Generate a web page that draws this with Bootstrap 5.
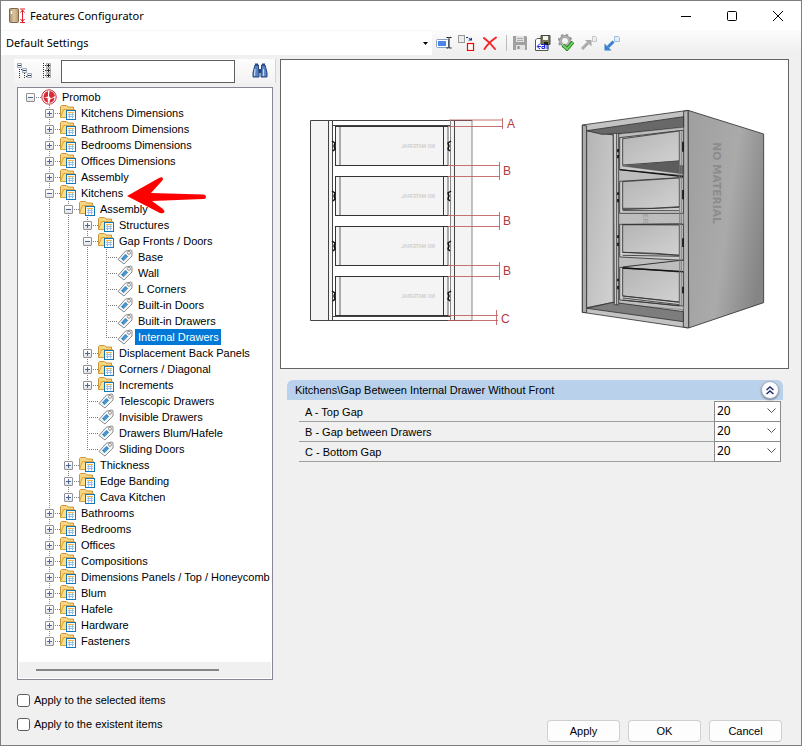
<!DOCTYPE html>
<html lang="en">
<head>
<meta charset="utf-8">
<meta name="viewport" content="width=device-width, initial-scale=1">
<title>Features Configurator</title>
<link href="https://cdn.jsdelivr.net/npm/bootstrap@5.3.0/dist/css/bootstrap.min.css" rel="stylesheet">
<style>
body{background:#fff;color:#000;font:11px/16px "Liberation Sans",Arial,sans-serif}
.win{min-height:calc(100vh - 3px);margin-right:4px;border:1px solid #7f7f7f;background:#f0f0f0}
.ui-font{font-family:"Noto Sans","Open Sans",sans-serif;font-size:11px}
.titlebar{height:29px;background:#fff;padding-left:7px}
.titlebar h1{font-size:11px;line-height:16px}
.caption-btn{width:46px;height:29px}
.plain{border:0;background:none;padding:0;color:inherit;display:flex;align-items:center;justify-content:center}
.settings{width:431px;background:#fff;border-top:1px solid #f7f7f7}
.preset{appearance:none;border:0;width:100%;height:24px;padding:0 16px 0 5px;color:#000;background:#fff url("data:image/svg+xml,%3Csvg xmlns='http://www.w3.org/2000/svg' width='5' height='3'%3E%3Cpath d='M0 0h5L2.500 3z'/%3E%3C/svg%3E") no-repeat right 4px center}
.tools{background:linear-gradient(#fcfcfc,#eee)}
.tools .plain{width:23px;height:24px}
.tool-sep{width:1px;height:16px;margin:0 1px 0 5px;background:#bdbdbd}
.side{width:279px}
.search-bar{height:24px;margin:0 4px 4px 13px;padding-right:4px;background:linear-gradient(#fdfdfd,#f3f3f3);border-right:1px solid #d4d4d4}
.search-bar .plain{width:22px;height:24px}
.search-bar input{width:174px;height:23px;border:1px solid #5f5f5f;background:#fff;padding:0 4px;margin:1px 0 0 3px}
.tree-box{margin:0 7px 0 16px;border:1px solid #828790;background:#fff;padding:1px 1px 0}
.tree,.tree ul{list-style:none;margin:0;padding:0}
.tree{padding-left:7px}
.tree ul{padding-left:19px}
.tree ul>li{background:repeating-linear-gradient(#808080 0 1px,transparent 1px 2px) 4px 0/1px 100% no-repeat}
.tree ul>li:last-child{background-size:1px 8px}
.node{height:16px;display:flex;align-items:center;white-space:nowrap;position:relative;background:repeating-linear-gradient(90deg,#808080 0 1px,transparent 1px 2px) 4px 8px/11px 1px no-repeat}
.node>svg{width:17px;height:16px;flex:none}
.node>span{padding:0 2px 0 3px;margin-left:1px}
.node.chosen>span{background:#0078d7;color:#fff}
.tog{width:9px;height:9px;margin:1px 6px 0 0;padding:0;border:1px solid #919191;border-radius:1px;background:linear-gradient(#4b63a7,#4b63a7) center/5px 1px no-repeat,linear-gradient(#fff,#e4e4e4);flex:none}
.tog.shut{background:linear-gradient(#4b63a7,#4b63a7) center/5px 1px no-repeat,linear-gradient(#4b63a7,#4b63a7) center/1px 5px no-repeat,linear-gradient(#fff,#e4e4e4)}
.leaf{padding-left:15px}
.pointer{position:absolute;left:81px;top:-9px}
.node>svg.pointer{width:80px;height:38px;z-index:2}
.hbar{height:16px;background:#f0f0f0;padding:7px 52px 0 17px;margin-bottom:1px}
.hbar div{height:2px;background:#868686}
.view{margin-right:12px;border:1px solid #646464;background:#fff}
.props{margin:11px 18px 0 7px}
.props-head{height:20px;background:#b9d1ea;border-radius:6px 6px 0 0;padding:0 4px 0 8px}
.fold{width:18px;height:18px;border-radius:50%;background:#fdfdff;border:1px solid #aab0bd;box-shadow:0 1px 2px #6b7890}
.props-body{margin:2px 2px 0 12px}
.prop{height:20px;border-bottom:1px solid #a0a0a0;padding-left:6px}
.prop select{width:67px;height:21px;margin-top:-1px;border:1px solid #8a8a8a;border-radius:0;color:#000;padding:0 20px 0 2px;font-size:12px;line-height:18px;background:#fff url("data:image/svg+xml,%3Csvg xmlns='http://www.w3.org/2000/svg' width='9' height='6'%3E%3Cpath d='M.5.5l4 4 4-4' fill='none' stroke='%23555'/%3E%3C/svg%3E") no-repeat right 4px center}
.foot{padding:12px 19px 3px 16px}
.foot-checks{padding-bottom:10px}
.foot label{gap:4px}
.foot input{width:13px;height:13px;margin:0;border:1px solid #5c5c5c;border-radius:3px}
.dlg-btn{width:73px;height:22px;padding:0;font-size:11px;line-height:18px;background:#fdfdfd;border:1px solid #d0d0d0;border-bottom-color:#bcbcbc;border-radius:4px;color:#000}
</style>
<script src="https://cdn.jsdelivr.net/npm/bootstrap@5.3.0/dist/js/bootstrap.bundle.min.js"></script>
</head>
<body>
<svg class="d-none" aria-hidden="true">
  <symbol id="folder" viewBox="0 0 17 16">
    <path d="M.5 12.500V1.500l1-1h5L8 2h5.500v3" fill="#f6d583" stroke="#c9963a"/>
    <path d="M.5 12.500L3.500 4.500h11L13 9l-5 3.500z" fill="#fbdf8d" stroke="#d9a23c"/>
    <rect x="6.500" y="5.500" width="9" height="9" fill="#fff" stroke="#1577b3"/>
    <path d="M8 7.500h6" stroke="#f2b73c"/><path d="M8 9.500h6M8 11.500h6M9.500 8v5.500M12.500 8v5.500" stroke="#9dc0e4"/>
  </symbol>
  <symbol id="tag" viewBox="0 0 17 16">
    <path d="M1 10.500L8.500 2l5.500-1 1 .8V7l-8 8z" fill="#f6f6f6" stroke="#8d8d8d"/>
    <path d="M4 9.500L8.500 5l2.500 2.500L6.500 12z" fill="#2f86c4"/><path d="M5.500 8L8 10.500M7 6.500L9.500 9" stroke="#8fc5ea" stroke-width=".7"/>
    <circle cx="12" cy="3.800" r="1.500" fill="#fff" stroke="#888" stroke-width=".9"/>
  </symbol>
</svg>
<div class="win d-flex flex-column">
  <header class="titlebar d-flex align-items-center">
    <svg width="18" height="18" viewBox="0 0 18 18"><defs><linearGradient id="door"><stop stop-color="#a98e68"/><stop offset=".5" stop-color="#dcc5a0"/><stop offset="1" stop-color="#b3986e"/></linearGradient></defs><rect x="1.500" y="1.500" width="9" height="14" rx="1" fill="url(#door)" stroke="#7d684c"/><path d="M3.500 4v3" stroke="#fff" stroke-width="1.500"/><path d="M12 2h5M12 15.500h5M14.500 3v12M12.500 5.500l2-2.500 2 2.500M12.500 12l2 2.500 2-2.500" fill="none" stroke="#e11b2c"/></svg>
    <h1 class="ui-font m-0 ms-1 fw-normal flex-grow-1">Features Configurator</h1>
    <button class="plain caption-btn" aria-label="Minimize"><svg width="10" height="10"><path d="M0 5.500h10" stroke="#000"/></svg></button>
    <button class="plain caption-btn" aria-label="Maximize"><svg width="10" height="10"><rect x=".5" y=".5" width="9" height="9" rx="1" fill="none" stroke="#000"/></svg></button>
    <button class="plain caption-btn" aria-label="Close"><svg width="10" height="10"><path d="M0 0l10 10M10 0L0 10" stroke="#000"/></svg></button>
  </header>
  <div class="d-flex">
    <div class="settings"><select class="preset ui-font" aria-label="Settings"><option>Default Settings</option></select></div>
    <div class="tools d-flex align-items-center flex-grow-1">
      <button class="plain" aria-label="Rename"><svg width="16" height="16"><rect x=".5" y="4.500" width="12" height="8" rx="1" fill="#fff" stroke="#8aa0bd"/><rect x="2" y="6" width="8" height="5" fill="#4a86e8"/><path d="M10.500 2.500h2l.5.500.5-.500h2M13 3v9.500M10.500 13h2l.5-.500.5.500h2" fill="none" stroke="#111"/></svg></button>
      <button class="plain" aria-label="Replace"><svg width="17" height="16" viewBox="0 0 17 16"><rect x=".5" y=".5" width="6" height="7" fill="#ececec" stroke="#999999"/><rect x="9.500" y="8.500" width="6" height="7" fill="#ffffff" stroke="#ff0000" stroke-width="1.200"/><path d="M8 2.500h2.500l2 2.500" fill="none" stroke="#113a9c" stroke-dasharray="2 1"/><path d="M10 5.500h4v-3z" fill="#113a9c"/></svg></button>
      <button class="plain" aria-label="Delete"><svg width="16" height="16"><path d="M2 3c4 3 8 7 11 11M14 2.500C9 6 5 10 2.500 14" fill="none" stroke="#f2282c" stroke-width="2" stroke-linecap="round"/></svg></button>
      <span class="tool-sep"></span>
      <button class="plain" aria-label="Save"><svg width="16" height="16"><path d="M1 1h13l1 1v13H1z" fill="#a0a0a0"/><path d="M4 1h8v6H4zM4 10h9v5H4z" fill="#e2e2e2"/><path d="M5 3.500h6M5 5.500h6" stroke="#aaa"/><path d="M5.500 11h2v3h-2z" fill="#8b8b8b"/></svg></button>
      <button class="plain" aria-label="Save as"><svg width="17" height="16"><path d="M3 3.500h11v12H1.500V5z" fill="#fff" stroke="#555"/><path d="M7 .5h9v9H7z" fill="#77765a" stroke="#444"/><path d="M9 1h5v4H9z" fill="#f3f3ec"/><path d="M10 7h4v3h-4z" fill="#222"/><path d="M6 8.500L3 11.500l3 2.500M4 11.500h3M8 9.500h2.500v4H8v-2h2M11.500 11h3M11.500 13h3" fill="none" stroke="#1725e0"/></svg></button>
      <button class="plain" aria-label="Validate"><svg width="16" height="17"><circle cx="7" cy="7" r="4.500" fill="none" stroke="#999" stroke-width="3"/><circle cx="7" cy="7" r="6.200" fill="none" stroke="#999" stroke-width="2" stroke-dasharray="2.500 2.370"/><circle cx="7" cy="7" r="4.200" fill="none" stroke="#c6c6c6"/><path d="M5 11l4 4 6-7" fill="none" stroke="#22861f" stroke-width="3.600"/><path d="M5 11l4 4 6-7" fill="none" stroke="#75d468" stroke-width="1.800"/></svg></button>
      <button class="plain" aria-label="Export"><svg width="16" height="16"><path d="M1 14l6-6" stroke="#aaa" stroke-width="3"/><path d="M4 5h6.500v6.500z" fill="#aaa"/><path d="M11.500 1.500h3l1 1v4h-4z" fill="#eee" stroke="#c5c5c5"/></svg></button>
      <button class="plain" aria-label="Import"><svg width="16" height="16"><path d="M9.500 6.500L4 12" stroke="#3b7fd0" stroke-width="3"/><path d="M.5 8.500V15.500H7.500z" fill="#3b7fd0"/><path d="M10.500 1.500h4l1 1v4h-5z" fill="#e4eefa" stroke="#9dbde6"/></svg></button>
    </div>
  </div>
  <div class="d-flex flex-grow-1 pt-1">
    <aside class="side d-flex flex-column flex-shrink-0">
      <div class="search-bar d-flex align-items-center">
        <button class="plain" aria-label="Expand tree"><svg width="16" height="16"><path d="M2.500 4v11M7.500 8v7M4 6.500h3M9 13.500h2" fill="none" stroke="#333" stroke-dasharray="1 1"/><path d="M.5.5h4v4h-4zM5.500 5.500h4v4h-4zM10.500 10.500h4v4h-4z" fill="#f7f7f7" stroke="#9ba8b8"/><path d="M1 2.500h3M6 7.500h3M11 12.500h3" stroke="#27496d"/></svg></button>
        <button class="plain" aria-label="Collapse tree"><svg width="11" height="16"><path d="M1.500 0v16M3 2.500h3M3 7.500h3M3 12.500h3" stroke="#333" stroke-dasharray="1 1"/><path d="M4.500.5h4v4h-4zM4.500 5.500h4v4h-4zM4.500 10.500h4v4h-4z" fill="#eee" stroke="#aaa"/><path d="M5 2.500h3M6.500 1v3M5 7.500h3M6.500 6v3M5 12.500h3M6.500 11v3" stroke="#222"/></svg></button>
        <input type="text" aria-label="Search features">
        <button class="plain ms-auto" aria-label="Find"><svg width="16" height="16"><path d="M3 2h3.500v4L7 7v7H1V9.500zM13 2H9.500v4L9 7v7h6V9.500z" fill="#5a83bf" stroke="#24467e"/><path d="M6.500 6h3v4h-3z" fill="#24467e"/><path d="M3 6L2.500 13M11.500 6v7" stroke="#c3d8f2" stroke-width="1.200"/><path d="M3 1.500h3M10 1.500h3" stroke="#24467e" stroke-width="2"/></svg></button>
      </div>
      <nav class="tree-box d-flex flex-column flex-grow-1" aria-label="Features">
        <ul class="tree flex-grow-1">
          <li>
            <div class="node"><button class="tog" aria-label="Toggle"></button><svg viewBox="0 0 17 16"><circle cx="8" cy="8" r="7.200" fill="#fff" stroke="#cf2c38"/><path d="M7 2.200A6 6 0 0 0 7 13.800L6.500 9 3 8.500 7 7.500zM8.500 2a6 6 0 0 1 5.500 5L10 9.500 8 7zM9 10.500l4.500-2A6 6 0 0 1 8.500 14z" fill="#d72a38"/></svg><span>Promob</span></div>
            <ul>
              <li><div class="node"><button class="tog shut" aria-label="Toggle"></button><svg><use href="#folder"/></svg><span>Kitchens Dimensions</span></div></li>
              <li><div class="node"><button class="tog shut" aria-label="Toggle"></button><svg><use href="#folder"/></svg><span>Bathroom Dimensions</span></div></li>
              <li><div class="node"><button class="tog shut" aria-label="Toggle"></button><svg><use href="#folder"/></svg><span>Bedrooms Dimensions</span></div></li>
              <li><div class="node"><button class="tog shut" aria-label="Toggle"></button><svg><use href="#folder"/></svg><span>Offices Dimensions</span></div></li>
              <li><div class="node"><button class="tog shut" aria-label="Toggle"></button><svg><use href="#folder"/></svg><span>Assembly</span></div></li>
              <li>
                <div class="node"><button class="tog" aria-label="Toggle"></button><svg><use href="#folder"/></svg><span>Kitchens</span>
                  <svg class="pointer" viewBox="0 0 80 38"><path d="M1 20L33 2q4-2 4 1 0 1-2 3L25 17l52 1.500q3 0 3 2.500t-3 2L26 25l11 8q3 3 0 4-2 1-5-1z" fill="#f00"/></svg></div>
                <ul>
                  <li>
                    <div class="node"><button class="tog" aria-label="Toggle"></button><svg><use href="#folder"/></svg><span>Assembly</span></div>
                    <ul>
                      <li><div class="node"><button class="tog shut" aria-label="Toggle"></button><svg><use href="#folder"/></svg><span>Structures</span></div></li>
                      <li>
                        <div class="node"><button class="tog" aria-label="Toggle"></button><svg><use href="#folder"/></svg><span>Gap Fronts / Doors</span></div>
                        <ul>
                          <li><div class="node leaf"><svg><use href="#tag"/></svg><span>Base</span></div></li>
                          <li><div class="node leaf"><svg><use href="#tag"/></svg><span>Wall</span></div></li>
                          <li><div class="node leaf"><svg><use href="#tag"/></svg><span>L Corners</span></div></li>
                          <li><div class="node leaf"><svg><use href="#tag"/></svg><span>Built-in Doors</span></div></li>
                          <li><div class="node leaf"><svg><use href="#tag"/></svg><span>Built-in Drawers</span></div></li>
                          <li><div class="node leaf chosen"><svg><use href="#tag"/></svg><span>Internal Drawers</span></div></li>
                        </ul>
                      </li>
                      <li><div class="node"><button class="tog shut" aria-label="Toggle"></button><svg><use href="#folder"/></svg><span>Displacement Back Panels</span></div></li>
                      <li><div class="node"><button class="tog shut" aria-label="Toggle"></button><svg><use href="#folder"/></svg><span>Corners / Diagonal</span></div></li>
                      <li><div class="node"><button class="tog shut" aria-label="Toggle"></button><svg><use href="#folder"/></svg><span>Increments</span></div></li>
                      <li><div class="node leaf"><svg><use href="#tag"/></svg><span>Telescopic Drawers</span></div></li>
                      <li><div class="node leaf"><svg><use href="#tag"/></svg><span>Invisible Drawers</span></div></li>
                      <li><div class="node leaf"><svg><use href="#tag"/></svg><span>Drawers Blum/Hafele</span></div></li>
                      <li><div class="node leaf"><svg><use href="#tag"/></svg><span>Sliding Doors</span></div></li>
                    </ul>
                  </li>
                  <li><div class="node"><button class="tog shut" aria-label="Toggle"></button><svg><use href="#folder"/></svg><span>Thickness</span></div></li>
                  <li><div class="node"><button class="tog shut" aria-label="Toggle"></button><svg><use href="#folder"/></svg><span>Edge Banding</span></div></li>
                  <li><div class="node"><button class="tog shut" aria-label="Toggle"></button><svg><use href="#folder"/></svg><span>Cava Kitchen</span></div></li>
                </ul>
              </li>
              <li><div class="node"><button class="tog shut" aria-label="Toggle"></button><svg><use href="#folder"/></svg><span>Bathrooms</span></div></li>
              <li><div class="node"><button class="tog shut" aria-label="Toggle"></button><svg><use href="#folder"/></svg><span>Bedrooms</span></div></li>
              <li><div class="node"><button class="tog shut" aria-label="Toggle"></button><svg><use href="#folder"/></svg><span>Offices</span></div></li>
              <li><div class="node"><button class="tog shut" aria-label="Toggle"></button><svg><use href="#folder"/></svg><span>Compositions</span></div></li>
              <li><div class="node"><button class="tog shut" aria-label="Toggle"></button><svg><use href="#folder"/></svg><span>Dimensions Panels / Top / Honeycomb</span></div></li>
              <li><div class="node"><button class="tog shut" aria-label="Toggle"></button><svg><use href="#folder"/></svg><span>Blum</span></div></li>
              <li><div class="node"><button class="tog shut" aria-label="Toggle"></button><svg><use href="#folder"/></svg><span>Hafele</span></div></li>
              <li><div class="node"><button class="tog shut" aria-label="Toggle"></button><svg><use href="#folder"/></svg><span>Hardware</span></div></li>
              <li><div class="node"><button class="tog shut" aria-label="Toggle"></button><svg><use href="#folder"/></svg><span>Fasteners</span></div></li>
            </ul>
          </li>
        </ul>
        <div class="hbar"><div></div></div>
      </nav>
    </aside>
    <main class="flex-grow-1">
      <div class="view">
        <svg class="d-block w-100" viewBox="281 60 507 308" role="img" aria-label="Internal drawer gaps">
          <defs>
            <linearGradient id="sideface" x1="0" y1=".2" x2="1" y2=".6"><stop stop-color="#a0a0a0"/><stop offset=".55" stop-color="#aaa"/><stop offset="1" stop-color="#858585"/></linearGradient>
            <linearGradient id="inner" x1="0" y1="0" x2="1" y2="1"><stop stop-color="#b4b4b4"/><stop offset="1" stop-color="#d2d2d2"/></linearGradient>
            <g id="drawer"><rect x="335.500" y=".5" width="113" height="39" fill="#f4f4f4" stroke="none"/><path d="M340 0v40M448 0v40" stroke="#aaa" stroke-width="2"/><path d="M335.500 0v40M443.500 0v40M335 .5h113M335 39.500h113" stroke="#333"/><path d="M332 15l3 2-1 3 1 3-2 2M451 15l-3 2 1 3-1 3 2 2" fill="none" stroke="#111" stroke-width="1.500"/>
            <text transform="translate(435 22) scale(-1 1)" font-size="5" font-weight="700" fill="#cfcfcf">NO MATERIAL</text></g>
          </defs>
          <path d="M310.500 120.500h22v200h-22zM450.500 120.500h21.500v200h-21.500z" fill="#f4f4f4"/>
          <path d="M310.500 320.500v-200h161.500M328.500 120v200M332.500 120v200M454.500 120v200M332 125.500h118M332 316.500h118M310.500 320.500h161.500" fill="none" stroke="#444"/>
          <path d="M472 120v200M450.500 120v200" stroke="#888"/>
          <use href="#drawer" y="126"/><use href="#drawer" y="176"/><use href="#drawer" y="226"/><use href="#drawer" y="276"/>
          <path d="M449 120h54M449 126.500h54M502.500 118v11M448 165.500h52M448 176.500h52M499.500 162v18M448 215.500h52M448 226.500h52M499.500 212v18M448 265.500h52M448 276.500h52M499.500 262v18M448 315.500h50M448 320.500h50M496.500 310v15" stroke="#bd5a5a" stroke-opacity=".85"/>
          <g font-size="12" fill="#b03b3b"><text x="507" y="128">A</text><text x="503" y="175">B</text><text x="503" y="225">B</text><text x="503" y="275">B</text><text x="501" y="323">C</text></g>
          <g transform="translate(560 90) scale(.3333)" stroke="#333" stroke-width="2.500" stroke-linejoin="round">
            <path d="M67 105L384 61v653L67 667z" fill="#c3c3c3"/>
            <path d="M384 61l227 71v506l-225 76z" fill="url(#sideface)"/>
            <path d="M371 64l13-3 2 653-16-3z" fill="#b4b4b4"/>
            <path d="M67 105l13 3v560l-13-1z" fill="#a9a9a9"/>
            <path d="M80 122l80 13v502L80 653z" fill="url(#inner)"/>
            <path d="M80 122L371 80v32l-195 19-50 2z" fill="#686868"/>
            <path d="M160 134l211-22v547l-195-16-16-7z" fill="#bdbdbd" stroke-width="1"/>
            <path d="M90 653l70-16 210 28v30L80 655z" fill="#7d7d7d"/>
            <path d="M160 130h16v515l-13-1zM170 130v515" fill="#ccc"/>
            <path d="M179 143l179-21 12-1v136l-191-18z" fill="#ccc"/><path d="M188 146l170-23v90l-170 12z" fill="url(#inner)"/><path d="M186 228l172-16v14l13 1v25z" fill="#5d5d5d" stroke-width="1"/><path d="M179 239l191 21" stroke="#111" stroke-width="4"/>
            <path d="M179 274l179-11h12v107H179z" fill="#ccc"/><path d="M188 275l170-11v88l-170 7z" fill="url(#inner)"/><path d="M188 355h92l78-5M188 362h170" fill="none"/>
            <path d="M179 403l179-1 12 2v107l-191-10z" fill="#ccc"/><path d="M188 404l170 1v91l-170-9z" fill="url(#inner)"/><path d="M188 404l182-2M188 487l100 3 70 6M188 496l170 3" fill="none"/><path d="M188 531l183-21" stroke-width="3"/>
            <path d="M179 532l191 14v102l-191-18z" fill="#ccc"/><path d="M188 534l170 12v91l-170-19z" fill="url(#inner)"/><path d="M188 534l182 11" stroke="#111" stroke-width="4"/><path d="M188 618l170 18M188 624l170 20M188 630l170 18" fill="none"/>
            <path d="M359 124v522M364 124v522" stroke="#777"/>
            <path d="M174 177v10M174 195v10M174 307v8M174 327v10M174 436v8M174 458v10M174 566v8M174 588v10M369 155v30M369 300v28M369 445v26M369 590v20" stroke="#111" stroke-width="5"/>
            <text transform="translate(460 157) rotate(90)" font-family="DejaVu Sans,sans-serif" font-size="32" font-weight="700" fill="#8c8c8c" stroke="none">NO MATERIAL</text>
            <text transform="translate(250 372) rotate(90)" font-size="20" fill="#999" stroke="none">ER</text>
          </g>
        </svg>
      </div>
      <section class="props">
        <div class="props-head d-flex align-items-center justify-content-between"><span>Kitchens\Gap Between Internal Drawer Without Front</span>
          <button class="plain fold" aria-label="Collapse section"><svg width="8" height="9"><path d="M.5 4L4 1l3.500 3M.5 8L4 5l3.500 3" fill="none" stroke="#1d2c6b" stroke-width="1.500"/></svg></button></div>
        <div class="props-body">
          <div class="prop d-flex align-items-center justify-content-between"><label for="gapA">A - Top Gap</label><select id="gapA" class="form-select ui-font"><option>20</option></select></div>
          <div class="prop d-flex align-items-center justify-content-between"><label for="gapB">B - Gap between Drawers</label><select id="gapB" class="form-select ui-font"><option>20</option></select></div>
          <div class="prop d-flex align-items-center justify-content-between"><label for="gapC">C - Bottom Gap</label><select id="gapC" class="form-select ui-font"><option>20</option></select></div>
        </div>
      </section>
    </main>
  </div>
  <footer class="foot d-flex justify-content-between align-items-end">
    <div class="foot-checks d-flex flex-column gap-2">
      <label class="d-flex align-items-center"><input class="form-check-input" type="checkbox">Apply to the selected items</label>
      <label class="d-flex align-items-center"><input class="form-check-input" type="checkbox">Apply to the existent items</label>
    </div>
    <div class="d-flex gap-2"><button class="btn dlg-btn">Apply</button><button class="btn dlg-btn">OK</button><button class="btn dlg-btn">Cancel</button></div>
  </footer>
</div>
</body>
</html>
